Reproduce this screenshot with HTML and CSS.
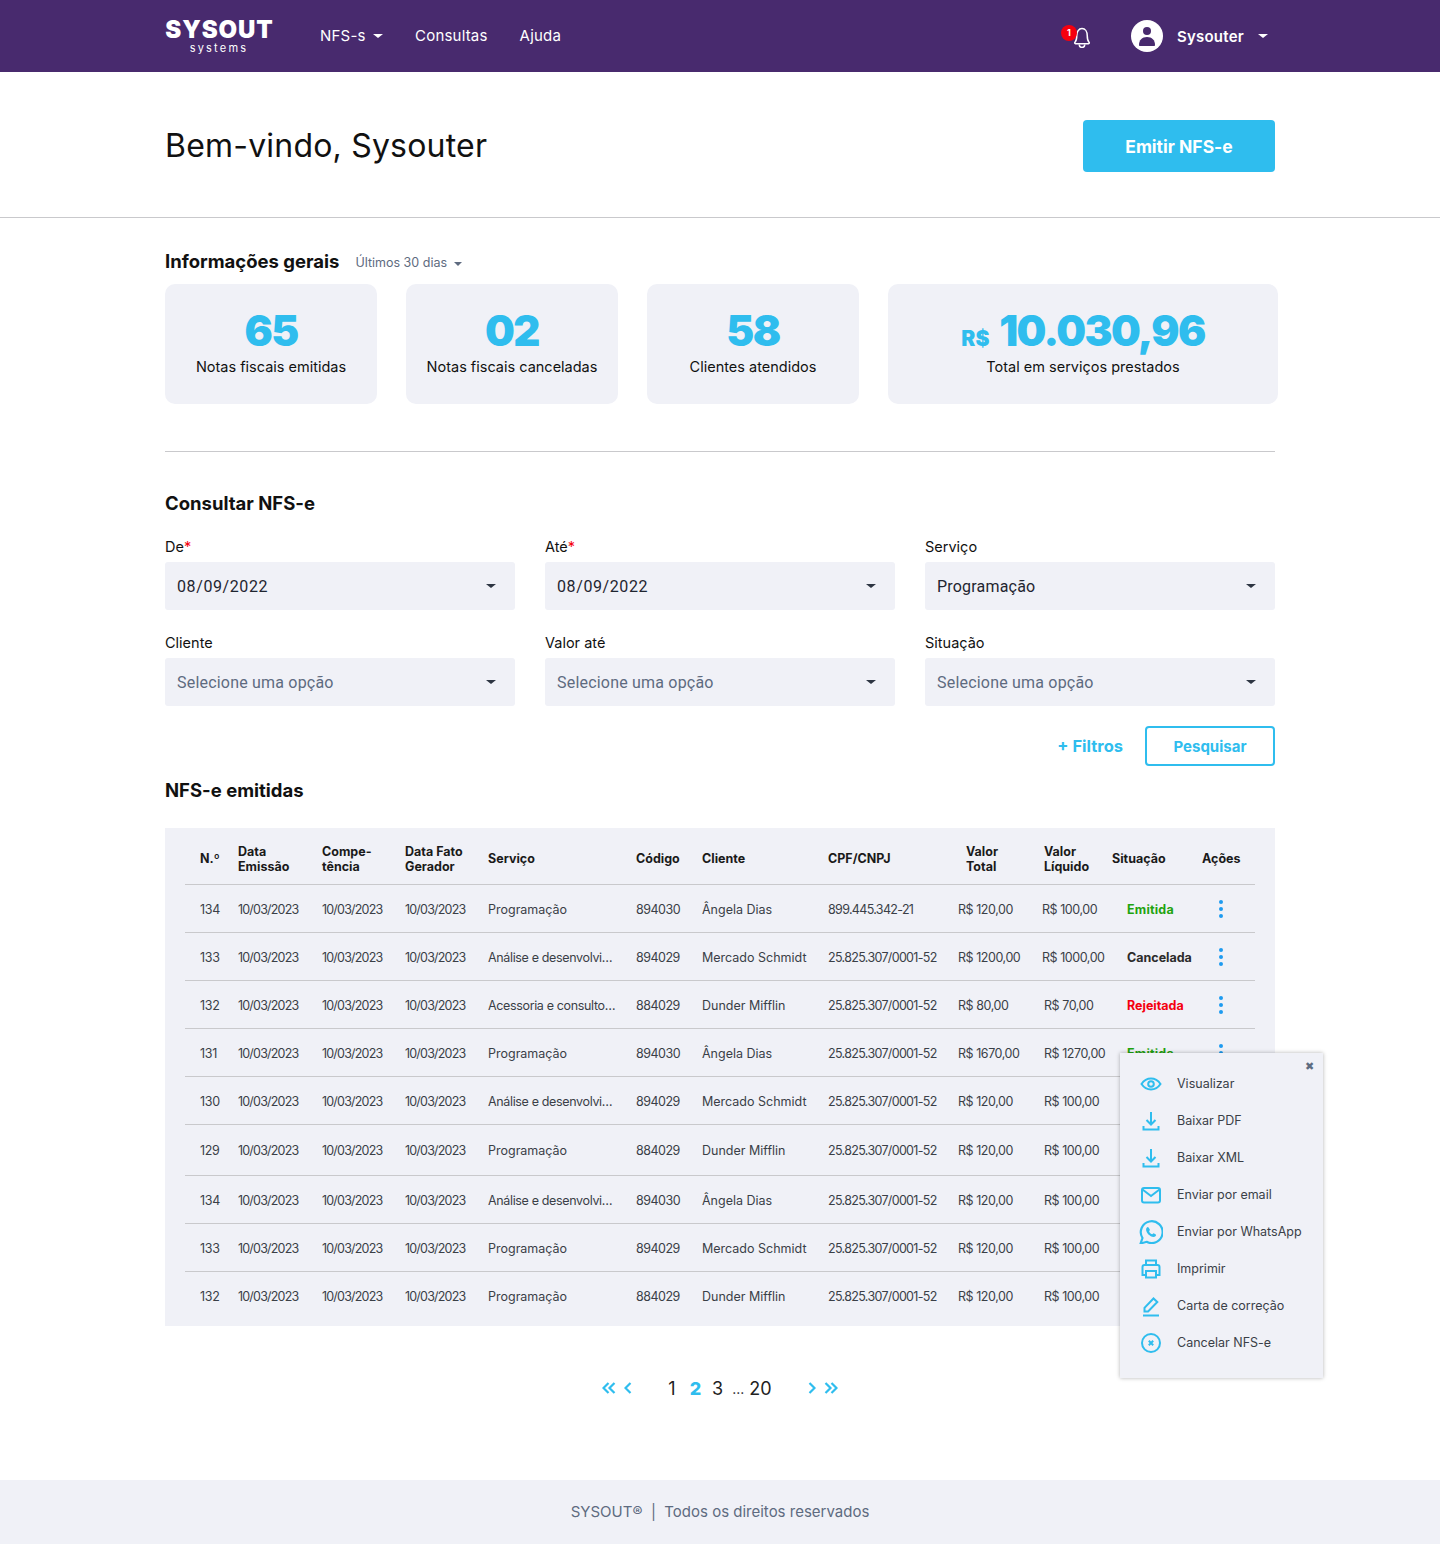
FILE: index.html
```html
<!DOCTYPE html>
<html lang="pt-BR">
<head>
    <meta charset="UTF-8">
    <meta name="viewport" content="width=device-width, initial-scale=1.0">
    <title>Sysout NFS-e</title>
    <link rel="stylesheet" href="styles.css">
</head>
<body>
    <header class="topbar">
        <div class="topbar-inner">
            <div class="logo">
                <span class="logo-name">SYSOUT</span>
                <span class="logo-sub">systems</span>
            </div>
            <nav class="menu">
                <a class="menu-item">NFS-s <i class="caret"></i></a>
                <a class="menu-item">Consultas</a>
                <a class="menu-item">Ajuda</a>
            </nav>
            <div class="bell">
                <svg width="18" height="21" viewBox="3 2.500 14 18" fill="none" stroke="#fff" stroke-width="1.300"><path d="M4 15.500c1.400-1.400 1.500-3 1.500-5.500 0-3.400 1.700-6.200 4.500-6.200s4.500 2.800 4.500 6.200c0 2.500.1 4.100 1.500 5.500 .5.500.3 1.300-.4 1.300H4.400c-.7 0-.9-.8-.4-1.300z"/><path d="M7.600 17.500c0 1.500 1 2.500 2.400 2.500s2.400-1 2.400-2.500"/></svg>
                <span class="bell-count">1</span>
            </div>
            <div class="user">
                <span class="avatar">
                    <svg width="16" height="20" viewBox="0 0 16 20" fill="#482a6e"><circle cx="8" cy="5" r="4"/><path d="M0 19c0-5 3-8 8-8s8 3 8 8c0 .6-.4 1-1 1H1c-.6 0-1-.4-1-1z"/></svg>
                </span>
                <span class="user-name">Sysouter</span>
                <i class="caret"></i>
            </div>
        </div>
    </header>

    <section class="welcome">
        <div class="container welcome-inner">
            <h1>Bem-vindo, Sysouter</h1>
            <button class="btn-emit">Emitir NFS-e</button>
        </div>
    </section>

    <main class="container">
        <div class="info-head">
            <h2>Informações gerais</h2>
            <span class="period">Últimos 30 dias <i class="caret caret-grey"></i></span>
        </div>
        <div class="cards">
            <div class="card"><strong>65</strong><span>Notas fiscais emitidas</span></div>
            <div class="card"><strong>02</strong><span>Notas fiscais canceladas</span></div>
            <div class="card"><strong>58</strong><span>Clientes atendidos</span></div>
            <div class="card card-wide"><strong><small>R$</small> 10.030,96</strong><span>Total em serviços prestados</span></div>
        </div>

        <hr class="divider">

        <h2 class="search-title">Consultar NFS-e</h2>
        <form class="filters">
            <div class="field"><label>De<em>*</em></label><div class="select date">08/09/2022<i class="caret caret-dark"></i></div></div>
            <div class="field"><label>Até<em>*</em></label><div class="select date">08/09/2022<i class="caret caret-dark"></i></div></div>
            <div class="field"><label>Serviço</label><div class="select">Programação<i class="caret caret-dark"></i></div></div>
            <div class="field"><label>Cliente</label><div class="select empty">Selecione uma opção<i class="caret caret-dark"></i></div></div>
            <div class="field"><label>Valor até</label><div class="select empty">Selecione uma opção<i class="caret caret-dark"></i></div></div>
            <div class="field"><label>Situação</label><div class="select empty">Selecione uma opção<i class="caret caret-dark"></i></div></div>
        </form>
        <div class="search-actions">
            <a class="more-filters">+ Filtros</a>
            <button class="btn-search">Pesquisar</button>
        </div>

        <h2 class="table-title">NFS-e emitidas</h2>
        <div class="table-wrap">
            <table class="notes">
                <colgroup>
                    <col class="c-num"><col class="c-date1"><col class="c-date2"><col class="c-date3"><col class="c-serv"><col class="c-code"><col class="c-client"><col class="c-cpf"><col class="c-total"><col class="c-net"><col class="c-status"><col class="c-act">
                </colgroup>
                <thead>
                    <tr>
                        <th>N.º</th><th>Data<br>Emissão</th><th>Compe-<br>tência</th><th>Data Fato<br>Gerador</th><th>Serviço</th><th>Código</th><th>Cliente</th><th>CPF/CNPJ</th><th class="th-total">Valor<br>Total</th><th class="th-net">Valor<br>Líquido</th><th>Situação</th><th>Ações</th>
                    </tr>
                </thead>
                <tbody>
                    <tr><td>134</td><td>10/03/2023</td><td>10/03/2023</td><td>10/03/2023</td><td>Programação</td><td>894030</td><td>Ângela Dias</td><td>899.445.342-21</td><td>R$ 120,00</td><td>R$ 100,00</td><td class="status ok">Emitida</td><td><span class="row-dots"><i></i><i></i><i></i></span></td></tr>
                    <tr><td>133</td><td>10/03/2023</td><td>10/03/2023</td><td>10/03/2023</td><td class="cut">Análise e desenvolvi…</td><td>894029</td><td>Mercado Schmidt</td><td>25.825.307/0001-52</td><td>R$ 1200,00</td><td>R$ 1000,00</td><td class="status cancelled">Cancelada</td><td><span class="row-dots"><i></i><i></i><i></i></span></td></tr>
                    <tr><td>132</td><td>10/03/2023</td><td>10/03/2023</td><td>10/03/2023</td><td class="cut">Acessoria e consulto…</td><td>884029</td><td>Dunder Mifflin</td><td>25.825.307/0001-52</td><td>R$ 80,00</td><td>R$ 70,00</td><td class="status rejected">Rejeitada</td><td><span class="row-dots"><i></i><i></i><i></i></span></td></tr>
                    <tr><td>131</td><td>10/03/2023</td><td>10/03/2023</td><td>10/03/2023</td><td>Programação</td><td>894030</td><td>Ângela Dias</td><td>25.825.307/0001-52</td><td>R$ 1670,00</td><td>R$ 1270,00</td><td class="status ok">Emitida</td><td><span class="row-dots"><i></i><i></i><i></i></span></td></tr>
                    <tr><td>130</td><td>10/03/2023</td><td>10/03/2023</td><td>10/03/2023</td><td class="cut">Análise e desenvolvi…</td><td>894029</td><td>Mercado Schmidt</td><td>25.825.307/0001-52</td><td>R$ 120,00</td><td>R$ 100,00</td><td class="status ok">Emitida</td><td><span class="row-dots"><i></i><i></i><i></i></span></td></tr>
                    <tr><td>129</td><td>10/03/2023</td><td>10/03/2023</td><td>10/03/2023</td><td>Programação</td><td>884029</td><td>Dunder Mifflin</td><td>25.825.307/0001-52</td><td>R$ 120,00</td><td>R$ 100,00</td><td class="status ok">Emitida</td><td><span class="row-dots"><i></i><i></i><i></i></span></td></tr>
                    <tr><td>134</td><td>10/03/2023</td><td>10/03/2023</td><td>10/03/2023</td><td class="cut">Análise e desenvolvi…</td><td>894030</td><td>Ângela Dias</td><td>25.825.307/0001-52</td><td>R$ 120,00</td><td>R$ 100,00</td><td class="status ok">Emitida</td><td><span class="row-dots"><i></i><i></i><i></i></span></td></tr>
                    <tr><td>133</td><td>10/03/2023</td><td>10/03/2023</td><td>10/03/2023</td><td>Programação</td><td>894029</td><td>Mercado Schmidt</td><td>25.825.307/0001-52</td><td>R$ 120,00</td><td>R$ 100,00</td><td class="status ok">Emitida</td><td><span class="row-dots"><i></i><i></i><i></i></span></td></tr>
                    <tr><td>132</td><td>10/03/2023</td><td>10/03/2023</td><td>10/03/2023</td><td>Programação</td><td>884029</td><td>Dunder Mifflin</td><td>25.825.307/0001-52</td><td>R$ 120,00</td><td>R$ 100,00</td><td class="status ok">Emitida</td><td><span class="row-dots"><i></i><i></i><i></i></span></td></tr>
                </tbody>
            </table>

            <div class="actions-menu">
                <span class="menu-close">✖</span>
                <a><svg width="24" height="24" viewBox="0 0 24 24" fill="none" stroke="#2fbdee" stroke-width="2"><path d="M2.500 12C5 8.300 8.200 6.500 12 6.500s7 1.800 9.500 5.500c-2.500 3.700-5.700 5.500-9.500 5.500S5 15.700 2.500 12z"/><circle cx="12" cy="12" r="2.800"/></svg>Visualizar</a>
                <a><svg width="24" height="24" viewBox="0 0 24 24" fill="none" stroke="#2fbdee" stroke-width="2"><path d="M12 3v12M7.500 11l4.500 4.500 4.500-4.500M4.500 17v3.500h15V17"/></svg>Baixar PDF</a>
                <a><svg width="24" height="24" viewBox="0 0 24 24" fill="none" stroke="#2fbdee" stroke-width="2"><path d="M12 3v12M7.500 11l4.500 4.500 4.500-4.500M4.500 17v3.500h15V17"/></svg>Baixar XML</a>
                <a><svg width="24" height="24" viewBox="0 0 24 24" fill="none" stroke="#2fbdee" stroke-width="2"><rect x="3" y="5" width="18" height="14.500" rx="2"/><path d="M3.500 6.500L12 13l8.500-6.500"/></svg>Enviar por email</a>
                <a><svg width="24" height="24" viewBox="1 1 22 22" fill="none" stroke="#2fbdee" stroke-width="2"><path d="M2.500 22.500l1.700-5A10 10 0 1 1 8 21l-5.500 1.500z"/><path fill="#2fbdee" stroke="none" d="M9 7.500c-.5 0-1.500.8-1.500 2.300 0 3 3.500 6.700 6.800 6.700 1.600 0 2.400-1 2.400-1.700 0-.4-1.900-1.600-2.400-1.600-.4 0-.7.800-1.100.8-1 0-2.900-1.900-2.900-2.800 0-.4.700-.7.700-1.100 0-.5-1.400-2.600-2-2.600z"/></svg>Enviar por WhatsApp</a>
                <a><svg width="24" height="24" viewBox="0 0 24 24" fill="none" stroke="#2fbdee" stroke-width="2"><path d="M7 8V3.500h10V8M7 18H3.500v-8c0-1 .7-2 2-2h13c1.300 0 2 1 2 2v8H17"/><rect x="7" y="14" width="10" height="6.500"/></svg>Imprimir</a>
                <a><svg width="24" height="24" viewBox="0 0 24 24" fill="none" stroke="#2fbdee" stroke-width="2"><path d="M5.500 17.500v-3.700L14.500 4.500l3.800 3.500-9.200 9.500z"/><path d="M4 21.500h16"/></svg>Carta de correção</a>
                <a><svg width="24" height="24" viewBox="0 0 24 24" fill="none" stroke="#2fbdee" stroke-width="2"><circle cx="12" cy="12" r="9"/><path d="M9.800 9.800l4.400 4.400M14.200 9.800l-4.400 4.400"/></svg>Cancelar NFS-e</a>
            </div>
        </div>

        <div class="pager">
            <span class="arrows">
                <svg width="14" height="12" viewBox="0 0 14 12" fill="none" stroke="#2fbdee" stroke-width="2.200"><path d="M6.500 1L1.500 6l5 5M12.500 1l-5 5 5 5"/></svg>
                <svg width="8" height="12" viewBox="0 0 8 12" fill="none" stroke="#2fbdee" stroke-width="2.200"><path d="M6.500 1l-5 5 5 5"/></svg>
            </span>
            <span class="pages"><a>1</a><a class="current">2</a><a>3</a><a class="dots">...</a><a>20</a></span>
            <span class="arrows">
                <svg width="8" height="12" viewBox="0 0 8 12" fill="none" stroke="#2fbdee" stroke-width="2.200"><path d="M1.500 1l5 5-5 5"/></svg>
                <svg width="14" height="12" viewBox="0 0 14 12" fill="none" stroke="#2fbdee" stroke-width="2.200"><path d="M1.500 1l5 5-5 5M7.500 1l5 5-5 5"/></svg>
            </span>
        </div>
    </main>

    <footer class="footer">SYSOUT®&nbsp; | &nbsp;Todos os direitos reservados</footer>
</body>
</html>
```

FILE: styles.css
```css
* {
    box-sizing: border-box;
    margin: 0;
    padding: 0;
}

body {
    font-family: Inter, "Noto Sans", sans-serif;
    color: #111;
    background-color: #fff;
}

.container {
    width: 1110px;
    margin: 0 auto;
}

.caret {
    display: inline-block;
    width: 0;
    height: 0;
    border-left: 5px solid transparent;
    border-right: 5px solid transparent;
    border-top: 4px solid #fff;
    vertical-align: middle;
}

.caret-grey {
    border-top-color: #5e6b80;
    border-left-width: 4px;
    border-right-width: 4px;
    margin-left: 3px;
}

.caret-dark {
    border-top-color: #2d3542;
}

/* top bar */
.topbar {
    height: 72px;
    background-color: #482a6e;
    color: #fff;
}

.topbar-inner {
    width: 1110px;
    height: 100%;
    margin: 0 auto;
    display: flex;
    align-items: center;
}

.logo {
    width: 108px;
    display: flex;
    flex-direction: column;
    align-items: center;
    margin-top: 1px;
}

.logo-name {
    font-size: 24px;
    line-height: 23px;
    font-weight: 900;
    letter-spacing: 0.900px;
    margin-left: 1px;
}

.logo-sub {
    font-size: 11px;
    line-height: 13px;
    letter-spacing: 2.200px;
    margin-top: 1px;
}

.menu {
    display: flex;
    align-items: center;
    margin-left: 47px;
    margin-top: -2px;
    gap: 32px;
    font-size: 15px;
    letter-spacing: 0.200px;
}

.menu-item .caret {
    margin-left: 3px;
}

.bell {
    position: relative;
    margin-left: auto;
    width: 18px;
    height: 21px;
    margin-right: 40px;
    margin-top: 3px;
}

.bell-count {
    position: absolute;
    left: -12px;
    top: -2px;
    width: 16px;
    height: 16px;
    border-radius: 50%;
    background-color: #f5000f;
    font-size: 9px;
    font-weight: 700;
    line-height: 16px;
    text-align: center;
    letter-spacing: 0;
}

.user {
    display: flex;
    align-items: center;
    margin-right: 7px;
    font-size: 15px;
    font-weight: 600;
    letter-spacing: 0.250px;
}

.avatar {
    width: 32px;
    height: 32px;
    border-radius: 50%;
    background-color: #fff;
    display: flex;
    align-items: center;
    justify-content: center;
    margin-right: 14px;
}

.user-name {
    margin-right: 14px;
}

/* welcome */
.welcome {
    height: 146px;
    border-bottom: 1px solid #c9c9cc;
}

.welcome-inner {
    display: flex;
    justify-content: space-between;
    padding-top: 48px;
}

h1 {
    font-size: 32px;
    line-height: 52px;
    font-weight: 400;
    letter-spacing: 0.200px;
}

.btn-emit {
    width: 192px;
    height: 52px;
    border: none;
    border-radius: 4px;
    background-color: #2fbdee;
    color: #fff;
    font-family: inherit;
    font-size: 17.500px;
    font-weight: 700;
}

/* info */
h2 {
    font-size: 18.500px;
    line-height: 24px;
    font-weight: 700;
}

.info-head {
    display: flex;
    align-items: center;
    padding-top: 31px;
}

.period {
    margin-left: 16px;
    font-size: 12.500px;
    color: #5e6b80;
    margin-top: 3px;
}

.cards {
    display: flex;
    gap: 29px;
    margin-top: 11px;
    width: 1113px;
}

.card {
    width: 212px;
    height: 120px;
    border-radius: 10px;
    background-color: #f0f1f7;
    display: flex;
    flex-direction: column;
    align-items: center;
    padding-top: 22px;
}

.card-wide {
    width: 390px;
}

.card strong {
    font-size: 42px;
    line-height: 50px;
    font-weight: 900;
    color: #2fbdee;
    letter-spacing: -1.600px;
}

.card small {
    font-size: 21px;
    line-height: 1;
    letter-spacing: 0;
    margin-right: 3px;
}

.card span {
    font-size: 14.500px;
    line-height: 20px;
    margin-top: 1px;
}

.divider {
    border: none;
    border-top: 1px solid #c9c9cc;
    margin-top: 47px;
}

/* search form */
.search-title {
    margin-top: 39px;
}

.filters {
    display: grid;
    grid-template-columns: repeat(3, 350px);
    column-gap: 30px;
    row-gap: 25px;
    margin-top: 24px;
}

.field label {
    display: block;
    font-size: 14.500px;
    line-height: 16px;
    margin-bottom: 7px;
}

.field em {
    color: #f5000f;
    font-style: normal;
}

.select {
    position: relative;
    height: 48px;
    padding: 0 12px;
    border-radius: 3px;
    background-color: #f0f1f7;
    font-family: Roboto, sans-serif;
    font-size: 16px;
    line-height: 50px;
    letter-spacing: 0.200px;
    color: #1f2530;
}

.select.date {
    letter-spacing: 0.600px;
}

.select.empty {
    color: #5e6b80;
}

.select .caret {
    position: absolute;
    right: 19px;
    top: 22px;
}

.search-actions {
    display: flex;
    justify-content: flex-end;
    align-items: center;
    gap: 22px;
    margin-top: 20px;
}

.more-filters {
    color: #2fbdee;
    font-size: 16.500px;
    font-weight: 700;
}

.btn-search {
    width: 130px;
    height: 40px;
    border: 2px solid #2fbdee;
    border-radius: 4px;
    background-color: #fff;
    color: #2fbdee;
    font-family: inherit;
    font-size: 15px;
    font-weight: 700;
}

.table-title {
    margin-top: 12px;
}

/* table */
.table-wrap {
    position: relative;
    margin-top: 26px;
    padding: 8px 20px 7px;
    background-color: #f0f1f7;
}

.notes {
    width: 1070px;
    table-layout: fixed;
    border-collapse: collapse;
    font-size: 12.500px;
    color: #3a3f47;
}

.c-num { width: 53px; }
.c-date1 { width: 84px; }
.c-date2 { width: 83px; }
.c-date3 { width: 83px; }
.c-serv { width: 148px; }
.c-code { width: 66px; }
.c-client { width: 126px; }
.c-cpf { width: 130px; }
.c-total { width: 84px; }
.c-net { width: 70px; }
.c-status { width: 90px; }
.c-act { width: 53px; }

.notes th {
    height: 48px;
    padding: 0 0 2px;
    text-align: left;
    font-size: 12.500px;
    line-height: 15px;
    font-weight: 700;
    color: #1a1a1a;
    border-bottom: 1px solid #c9c9cc;
}

.notes th:first-child,
.notes td:first-child {
    padding-left: 15px;
}

.notes .th-total {
    padding-left: 8px;
}

.notes .th-net {
    padding-left: 2px;
}

.notes td {
    height: 48px;
    padding: 2px 0 0;
    white-space: nowrap;
    overflow: visible;
    border-bottom: 1px solid #c9c9cc;
}

/* digits in the reference face are narrower than in this one */
.notes td:nth-child(1) { letter-spacing: -0.300px; }
.notes td:nth-child(2),
.notes td:nth-child(3),
.notes td:nth-child(4) { letter-spacing: -0.800px; }
.notes td:nth-child(6) { letter-spacing: -0.500px; }
.notes td:nth-child(8) { letter-spacing: -0.670px; }
.notes td:nth-child(9),
.notes td:nth-child(10) { letter-spacing: -0.450px; }
.notes td.cut { letter-spacing: -0.350px; }

.notes tbody tr:nth-child(n+3) td:nth-child(10) {
    padding-left: 2px;
}

.notes tbody tr:last-child td {
    border-bottom: none;
}

.notes tbody tr:nth-child(6) td {
    height: 51px;
}

.notes .status {
    font-weight: 700;
    padding-left: 15px;
    letter-spacing: 0.200px;
}

.ok { color: #1fa30f; }
.cancelled { color: #2b2b2b; }
.rejected { color: #f5000f; }

.notes .status.cancelled,
.notes .status.rejected {
    letter-spacing: 0;
}

.row-dots {
    display: flex;
    flex-direction: column;
    gap: 3px;
    margin-left: 17px;
}

.row-dots i {
    width: 4px;
    height: 4px;
    border-radius: 50%;
    background-color: #1e9bf0;
}

/* actions popup */
.actions-menu {
    position: absolute;
    left: 955px;
    top: 225px;
    width: 203px;
    height: 325px;
    padding-top: 12px;
    background-color: #f0f1f7;
    box-shadow: 0 0 4px rgba(0,0,0,0.3);
    font-size: 12.500px;
    color: #3a3f47;
}

.actions-menu a {
    display: flex;
    align-items: center;
    gap: 14px;
    height: 37px;
    padding-left: 19px;
}

.menu-close {
    position: absolute;
    right: 9px;
    top: 6px;
    font-size: 11px;
    color: #5e6b80;
}

/* pager */
.pager {
    display: flex;
    justify-content: center;
    align-items: center;
    margin-top: 50px;
    gap: 36px;
    height: 24px;
}

.arrows {
    display: flex;
    align-items: center;
    gap: 8px;
}

.pages {
    display: flex;
    align-items: center;
    gap: 11px;
    font-size: 18px;
    color: #222;
}

.pages .current {
    color: #2fbdee;
    font-weight: 800;
    margin-left: 3px;
}

.pages .dots {
    font-size: 14px;
    margin: 0 -6px 0 -2px;
}

/* footer */
.footer {
    height: 64px;
    margin-top: 80px;
    background-color: #f0f1f7;
    color: #5e6b80;
    font-size: 15px;
    line-height: 64px;
    text-align: center;
}
```
